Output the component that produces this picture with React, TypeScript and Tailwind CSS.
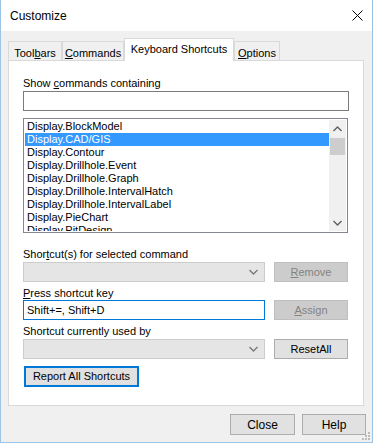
const font = { fontFamily: '"Liberation Sans", Arial, sans-serif' }

const items = [
  "Display.BlockModel",
  "Display.CAD/GIS",
  "Display.Contour",
  "Display.Drillhole.Event",
  "Display.Drillhole.Graph",
  "Display.Drillhole.IntervalHatch",
  "Display.Drillhole.IntervalLabel",
  "Display.PieChart",
  "Display.PitDesign",
]

const Chevron = ({ up = false, color = "#606060" }: { up?: boolean; color?: string }) => (
  <svg width="9" height="6" viewBox="0 0 9 6">
    <polyline
      points={up ? "0.5,5 4.5,1 8.5,5" : "0.5,1 4.5,5 8.5,1"}
      fill="none"
      stroke={color}
      strokeWidth="1.4"
    />
  </svg>
)

const Combo = () => (
  <div className="flex h-[20px] w-[242px] items-center justify-end border border-[#cccccc] bg-[#e5e5e5] pr-[6px]">
    <Chevron color="#7a7a7a" />
  </div>
)

const Label = ({ children, className = "" }: { children: React.ReactNode; className?: string }) => (
  <div className={"h-[13px] text-[11px] leading-[13px] text-black " + className}>{children}</div>
)

const Tab = ({ children, w, active = false }: { children: React.ReactNode; w: string; active?: boolean }) => (
  <div
    className={
      active
        ? "relative z-10 -mb-px flex h-[23px] items-start justify-center border border-b-0 border-[#d9d9d9] bg-white pt-[3px] text-[11px] " + w
        : "flex h-[19px] items-start justify-center border border-b-0 border-[#d9d9d9] bg-[#f0f0f0] pt-[3px] text-[11px] " + w
    }
  >
    {children}
  </div>
)

export default function App() {
  return (
    <div className="h-[446px] w-[375px] bg-white" style={font}>
      <div className="relative flex h-[443px] w-[373px] flex-col border-x border-b border-[#9dc3e6] bg-[#f0f0f0]">
        <div className="flex h-[31px] items-center justify-between bg-white pl-[9px] pr-[9px]">
          <span className="text-[12px] text-black">Customize</span>
          <svg width="11" height="11" viewBox="0 0 11 11">
            <path d="M0.5 0.5 L10.5 10.5 M10.5 0.5 L0.5 10.5" stroke="#000" strokeWidth="1" />
          </svg>
        </div>

        <div className="flex flex-col pl-[7px] pt-[7px]">
          <div className="flex h-[22px] items-end">
            <Tab w="w-[54px]">
              <span>Tool<u>b</u>ars</span>
            </Tab>
            <Tab w="w-[62px]">
              <span><u>C</u>ommands</span>
            </Tab>
            <Tab w="w-[110px]" active>
              <span className="-mt-[1px]">Keyboard Shortcuts</span>
            </Tab>
            <Tab w="w-[46px]">
              <span><u>O</u>ptions</span>
            </Tab>
          </div>

          <div className="flex h-[346px] w-[356px] flex-col border border-[#d9d9d9] bg-white px-[14px]">
            <Label className="mt-[16px]">
              Show <u>c</u>ommands containing
            </Label>
            <div className="mt-[1px] h-[20px] w-[326px] border border-[#7a7a7a] bg-white" />

            <div className="mt-[7px] flex h-[115px] w-[325px] border border-[#828790] bg-white p-[1px]">
              <div className="flex-1 overflow-hidden">
                {items.map((it, i) => (
                  <div
                    key={it}
                    className={
                      i === 1
                        ? "h-[13px] bg-[#3399ff] px-[2px] text-[11px] leading-[13px] text-white"
                        : "h-[13px] px-[2px] text-[11px] leading-[13px] text-black"
                    }
                  >
                    {it}
                  </div>
                ))}
              </div>
              <div className="flex w-[17px] flex-col bg-[#f0f0f0]">
                <div className="flex h-[18px] items-center justify-center">
                  <Chevron up />
                </div>
                <div className="mx-[1px] h-[17px] bg-[#cdcdcd]" />
                <div className="flex-1" />
                <div className="flex h-[17px] items-center justify-center">
                  <Chevron />
                </div>
              </div>
            </div>

            <Label className="mt-[15px]">
              Shor<u>t</u>cut(s) for selected command
            </Label>
            <div className="mt-[1px] flex items-center gap-[9px]">
              <Combo />
              <div className="flex h-[20px] w-[74px] items-center justify-center border border-[#bfbfbf] bg-[#cccccc] text-[11px] text-[#838383]">
                <span><u>R</u>emove</span>
              </div>
            </div>

            <Label className="mt-[5px]">
              <u>P</u>ress shortcut key
            </Label>
            <div className="flex items-center gap-[9px]">
              <div className="flex h-[20px] w-[242px] items-center border border-[#0078d7] bg-white pl-[3px] text-[11px] text-black">
                Shift+=, Shift+D
              </div>
              <div className="flex h-[20px] w-[74px] items-center justify-center border border-[#bfbfbf] bg-[#cccccc] text-[11px] text-[#838383]">
                <span><u>A</u>ssign</span>
              </div>
            </div>

            <Label className="mt-[5px]">Shortcut currently used by</Label>
            <div className="mt-[1px] flex items-center gap-[9px]">
              <Combo />
              <div className="flex h-[20px] w-[74px] items-center justify-center border border-[#adadad] bg-[#e1e1e1] text-[11px] text-black">
                ResetAll
              </div>
            </div>

            <div className="ml-[1px] mt-[7px] flex h-[21px] w-[115px] items-center justify-center border-2 border-[#0078d7] bg-[#e1e1e1] text-[11px] text-black">
              Report All Shortcuts
            </div>
          </div>
        </div>

        <div className="mt-[8px] flex justify-end gap-[7px] pr-[6px]">
          <div className="flex h-[21px] w-[65px] items-center justify-center border border-[#adadad] bg-[#e1e1e1] text-[12px] text-black">
            Close
          </div>
          <div className="flex h-[21px] w-[64px] items-center justify-center border border-[#adadad] bg-[#e1e1e1] text-[12px] text-black">
            Help
          </div>
        </div>

        <svg className="absolute bottom-[2px] right-[2px]" width="10" height="10" viewBox="0 0 10 10">
          <rect x="8" y="2" width="2" height="2" fill="#bcbcbc" />
          <rect x="5" y="5" width="2" height="2" fill="#bcbcbc" />
          <rect x="8" y="5" width="2" height="2" fill="#bcbcbc" />
          <rect x="2" y="8" width="2" height="2" fill="#bcbcbc" />
          <rect x="5" y="8" width="2" height="2" fill="#bcbcbc" />
          <rect x="8" y="8" width="2" height="2" fill="#bcbcbc" />
        </svg>
      </div>
    </div>
  )
}
